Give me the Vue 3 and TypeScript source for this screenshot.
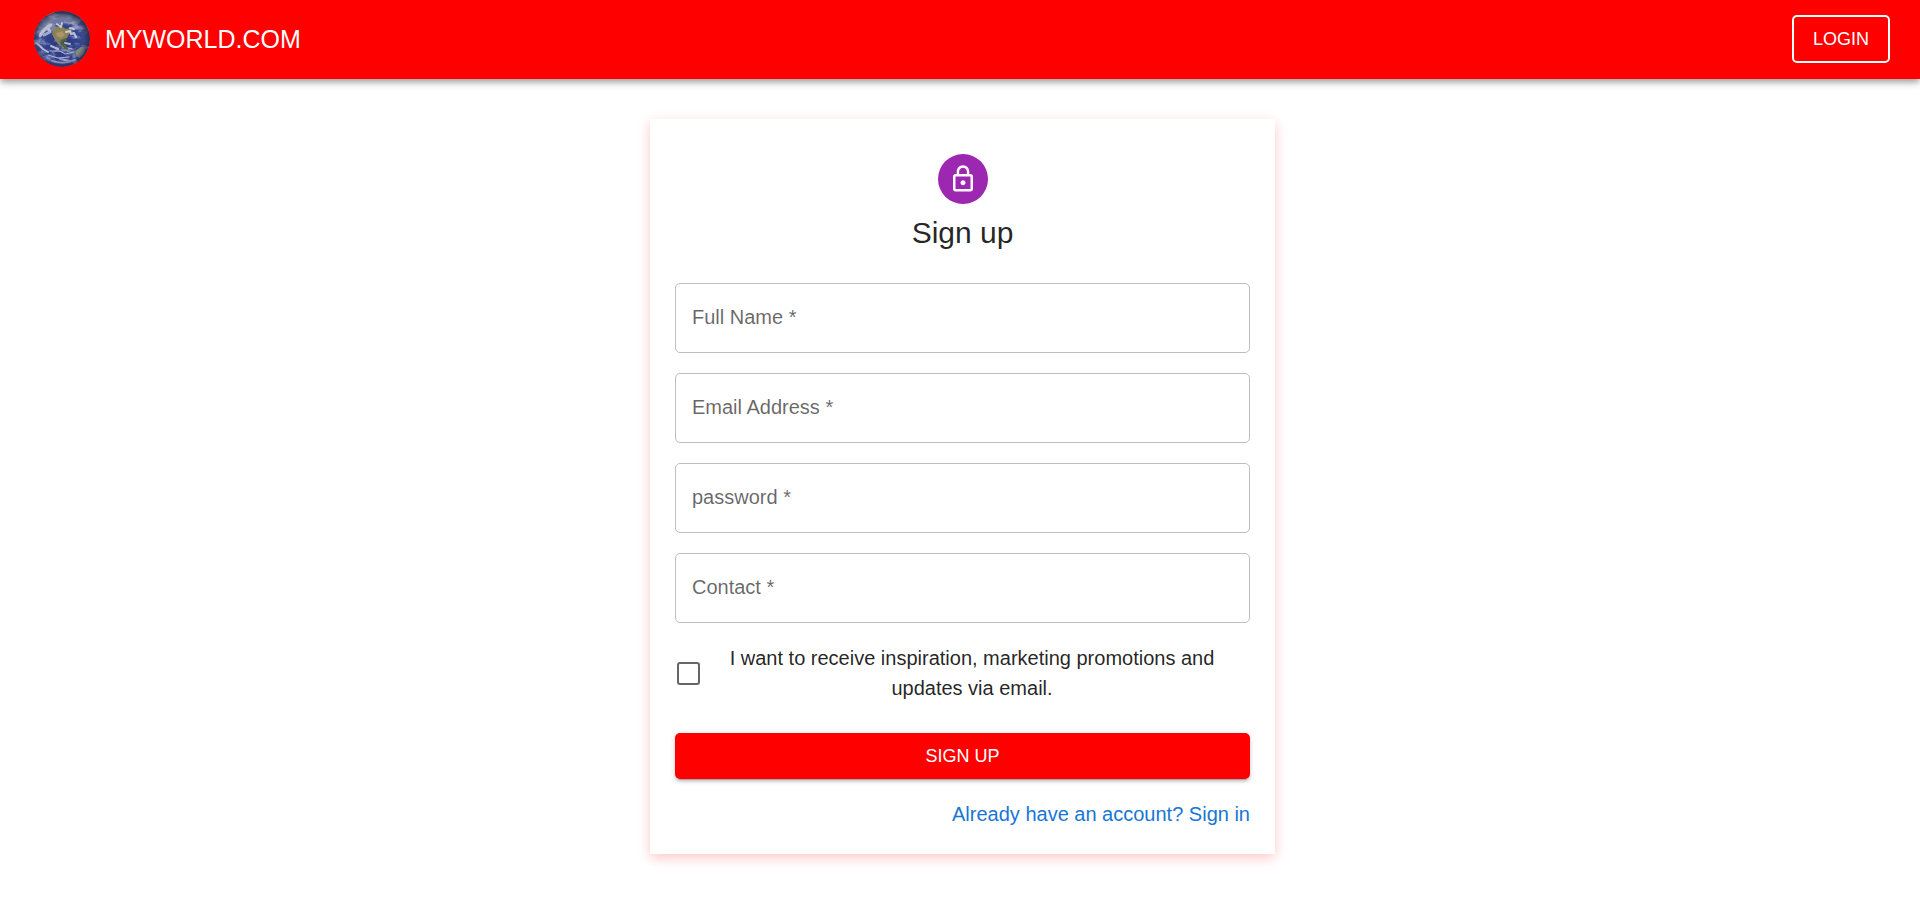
<script setup lang="ts">
import { reactive, ref } from 'vue'

interface Field {
  id: string
  label: string
  type: string
  autocomplete: string
}

const fields: Field[] = [
  { id: 'fullName', label: 'Full Name', type: 'text', autocomplete: 'name' },
  { id: 'email', label: 'Email Address', type: 'email', autocomplete: 'email' },
  { id: 'password', label: 'password', type: 'password', autocomplete: 'new-password' },
  { id: 'contact', label: 'Contact', type: 'tel', autocomplete: 'tel' },
]

const values = reactive<Record<string, string>>({ fullName: '', email: '', password: '', contact: '' })
const wantsUpdates = ref(false)
</script>

<template>
  <div class="page">
    <header class="bar">
      <svg class="globe" viewBox="0 0 56 56" aria-hidden="true">
        <defs>
          <radialGradient id="ocean" cx="0.5" cy="0.6" r="0.55">
            <stop offset="0" stop-color="#27347c" />
            <stop offset="0.65" stop-color="#35458f" />
            <stop offset="1" stop-color="#4c5a92" />
          </radialGradient>
          <radialGradient id="rim" cx="0.48" cy="0.52" r="0.52">
            <stop offset="0.75" stop-color="#20203c" stop-opacity="0" />
            <stop offset="1" stop-color="#20203c" stop-opacity="0.8" />
          </radialGradient>
          <filter id="clouds" x="0" y="0" width="1" height="1">
            <feTurbulence type="fractalNoise" baseFrequency="0.09 0.14" numOctaves="4" seed="8" />
            <feColorMatrix values="0 0 0 0 0.74  0 0 0 0 0.77  0 0 0 0 0.88  3.6 0 0 0 -1.7" />
          </filter>
          <filter id="soft"><feGaussianBlur stdDeviation="0.5" /></filter>
          <clipPath id="disc"><circle cx="28" cy="28" r="28" /></clipPath>
        </defs>
        <g clip-path="url(#disc)">
          <rect width="56" height="56" fill="url(#ocean)" />
          <path d="M8 8Q27-3 48 9L43 15Q30 9 19 16L7 24L2 21Z" fill="#858aa4" opacity="0.7" filter="url(#soft)" />
          <rect width="56" height="56" filter="url(#clouds)" opacity="0.5" />
          <g filter="url(#soft)">
            <path d="M20 17L27 15L32 18L36 17L38 20L35 23L33 27L30 29L27 28L25 30L27 34L31 34L34 38L31 37L25 34L21 29L18 23Z" fill="#8b8157" />
            <path d="M22 22L28 20L31 24L27 27L23 25Z" fill="#ac9368" />
            <path d="M27 29L32 27L33 30L29 31L31 35L35 38L33 39L27 34Z" fill="#4e652f" />
            <path d="M41 40L47 36L52 36L50 43L45 47L42 44Z" fill="#7c887c" />
            <g fill="none" stroke="#dfe1ea" stroke-linecap="round" stroke-linejoin="round">
              <path d="M6 25Q10 17 17 14M10 24L16 21L14 17" stroke-width="3" opacity="0.65" />
              <path d="M23 13L27 16L28 12M32 21L36 20L37 23L40 22L42 26M36 17L40 18" stroke-width="2" opacity="0.8" />
              <path d="M2 32L6 35L9 38L14 41M31 32L36 33M17 35L24 38" stroke-width="2" opacity="0.75" />
              <path d="M16 40L26 40L31 43L40 41M14 44L24 47L35 46M34 37L38 38" stroke-width="1" opacity="0.75" />
              <path d="M18 50Q30 54 41 49M26 48L36 50" stroke-width="2" opacity="0.5" />
            </g>
          </g>
          <circle cx="28" cy="28" r="28" fill="url(#rim)" />
        </g>
      </svg>
      <span class="brand">MYWORLD.COM</span>
      <button class="login" type="button">LOGIN</button>
    </header>

    <main class="main">
      <form class="card" @submit.prevent>
        <div class="avatar">
          <svg viewBox="0 0 24 24" aria-hidden="true">
            <path
              fill="currentColor"
              d="M12 17c1.100 0 2-.9 2-2s-.9-2-2-2-2 .9-2 2 .9 2 2 2zm6-9h-1V6c0-2.760-2.240-5-5-5S7 3.240 7 6v2H6c-1.100 0-2 .9-2 2v10c0 1.100.9 2 2 2h12c1.100 0 2-.9 2-2V10c0-1.100-.9-2-2-2zM8.900 6c0-1.710 1.390-3.100 3.100-3.100s3.100 1.390 3.100 3.100v2H8.900V6zM18 20H6V10h12v10z"
            />
          </svg>
        </div>
        <h1 class="title">Sign up</h1>

        <div class="fields">
          <div v-for="field in fields" :key="field.id" class="field">
            <input
              :id="field.id"
              v-model="values[field.id]"
              class="input"
              :type="field.type"
              :autocomplete="field.autocomplete"
              placeholder=" "
              required
            />
            <label class="label" :for="field.id">{{ field.label }}&nbsp;*</label>
          </div>
        </div>

        <div class="consent">
          <input id="updates" v-model="wantsUpdates" class="check" type="checkbox" />
          <label class="consent-text" for="updates">
            I want to receive inspiration, marketing promotions and updates via email.
          </label>
        </div>

        <button class="submit" type="submit">SIGN UP</button>
        <a class="signin" href="#signin">Already have an account? Sign in</a>
      </form>
    </main>
  </div>
</template>

<style>
body {
  margin: 0;
  background: #fff;
}
</style>

<style scoped>
.page {
  font-family: "Liberation Sans", Arial, sans-serif;
  font-size: 20px;
  line-height: 30px;
  color: rgba(0, 0, 0, 0.87);
}

.page *,
.page *::before {
  box-sizing: border-box;
}

.bar {
  display: flex;
  align-items: center;
  min-height: 79px;
  padding: 0 30px 2px 34px;
  color: #fff;
  background: #f00;
  box-shadow:
    0 3px 5px -1px rgba(0, 0, 0, 0.2),
    0 5px 6px rgba(0, 0, 0, 0.14),
    0 1px 12px rgba(0, 0, 0, 0.12);
}

.globe {
  width: 56px;
  height: 56px;
  margin-right: 15px;
}

.brand {
  flex: 1;
  font-size: 25px;
}

.login {
  padding: 7px 19px;
  font: inherit;
  font-size: 18px;
  color: #fff;
  background: transparent;
  border: 2px solid #fff;
  border-radius: 5px;
  cursor: pointer;
}

.main {
  display: flex;
  justify-content: center;
  padding: 40px 0 40px 5px;
}

.card {
  display: flex;
  flex-direction: column;
  width: 100%;
  max-width: 625px;
  padding: 35px 25px 25px;
  background: #fff;
  box-shadow: 0 4px 12px rgba(255, 0, 0, 0.22);
}

.avatar {
  display: grid;
  place-items: center;
  align-self: center;
  width: 50px;
  height: 50px;
  color: #fff;
  background: #9c27b0;
  border-radius: 50%;
}

.avatar svg {
  width: 30px;
  height: 30px;
}

.title {
  margin: 9px 0 30px;
  font-size: 30px;
  font-weight: 400;
  line-height: 40px;
  text-align: center;
}

.fields {
  display: grid;
  gap: 20px;
}

.field {
  position: relative;
}

.input {
  display: block;
  width: 100%;
  height: 70px;
  padding: 0 17px;
  font: inherit;
  color: inherit;
  background: transparent;
  border: 1px solid #bebebe;
  border-radius: 5px;
  outline: none;
}

.input:focus {
  border-color: #1976d2;
}

.label {
  position: absolute;
  top: 19px;
  left: 17px;
  color: rgba(0, 0, 0, 0.6);
  pointer-events: none;
}

.input:focus + .label,
.input:not(:placeholder-shown) + .label {
  top: -10px;
  left: 14px;
  padding: 0 5px;
  font-size: 15px;
  line-height: 20px;
  background: #fff;
}

.consent {
  display: flex;
  align-items: center;
  margin: 20px 0 30px;
  padding: 0 20px 0 2px;
}

.check {
  flex: none;
  width: 23px;
  height: 23px;
  margin: 0 14px 0 0;
  appearance: none;
  background: #fff;
  border: 2px solid #666;
  border-radius: 3px;
  cursor: pointer;
}

.check:checked {
  background: #1976d2;
  border-color: #1976d2;
}

.consent-text {
  flex: 1;
  text-align: center;
}

.submit {
  padding: 8px 20px;
  font: inherit;
  font-size: 18px;
  color: #fff;
  background: #f00;
  border: 0;
  border-radius: 5px;
  box-shadow:
    0 4px 1px -3px rgba(0, 0, 0, 0.2),
    0 3px 3px rgba(0, 0, 0, 0.14),
    0 1px 6px rgba(0, 0, 0, 0.12);
  cursor: pointer;
}

.signin {
  align-self: flex-end;
  margin-top: 20px;
  color: #1976d2;
  text-decoration: none;
}
</style>
